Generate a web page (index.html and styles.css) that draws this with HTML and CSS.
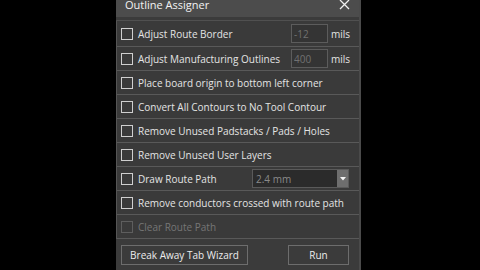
FILE: index.html
```html
<!DOCTYPE html>
<html>
<head>
<title>Outline Assigner</title>
<link rel="stylesheet" href="styles.css">
</head>
<body>

<div class="dialog">
  <div class="titlebar">
    <span class="title">Outline Assigner</span>
    <svg class="close" width="11" height="11" viewBox="0 0 11 11">
      <path d="M1 1 L10 10 M10 1 L1 10" stroke="#f0f0f0" stroke-width="1.3" fill="none"/>
    </svg>
  </div>

  <div class="options">
    <div class="row first">
      <span class="check"></span>
      <span class="label">Adjust Route Border</span>
      <input class="field" type="text" value="-12" disabled>
      <span class="unit">mils</span>
    </div>
    <div class="row">
      <span class="check"></span>
      <span class="label">Adjust Manufacturing Outlines</span>
      <input class="field" type="text" value="400" disabled>
      <span class="unit">mils</span>
    </div>
    <div class="row">
      <span class="check"></span>
      <span class="label">Place board origin to bottom left corner</span>
    </div>
    <div class="row">
      <span class="check"></span>
      <span class="label">Convert All Contours to No Tool Contour</span>
    </div>
    <div class="row">
      <span class="check"></span>
      <span class="label">Remove Unused Padstacks / Pads / Holes</span>
    </div>
    <div class="row">
      <span class="check"></span>
      <span class="label">Remove Unused User Layers</span>
    </div>
    <div class="row">
      <span class="check"></span>
      <span class="label">Draw Route Path</span>
      <div class="select">
        <span class="select-value">2.4 mm</span>
        <span class="select-arrow">
          <svg width="6" height="4" viewBox="0 0 6 4"><path d="M0 0 H6 L3 3.5 Z" fill="#f4f4f4"/></svg>
        </span>
      </div>
    </div>
    <div class="row">
      <span class="check"></span>
      <span class="label">Remove conductors crossed with route path</span>
    </div>
    <div class="row disabled">
      <span class="check"></span>
      <span class="label">Clear Route Path</span>
    </div>
  </div>

  <div class="buttons">
    <button class="btn wide">Break Away Tab Wizard</button>
    <button class="btn run">Run</button>
  </div>
</div>

</body>
</html>
```

FILE: styles.css
```css
body {
    margin: 0;
    background-color: #000;
    font-family: "Open Sans", "Noto Sans", sans-serif;
    font-size: 10px;
    color: #e4e4e4;
    overflow: hidden;
}

.dialog {
    width: 243px;
    margin: -9px 0 0 116px;
    background-color: #3b3b3b;
    border-right: 2px solid #4a4a4a;
    height: 300px;
}

.titlebar {
    height: 26px;
    background-color: #4c4c4c;
    display: flex;
    align-items: center;
    justify-content: space-between;
    padding: 0 9px 0 9px;
    font-size: 11px;
    color: #f2f2f2;
}

.options {
    margin-top: 3px;
    border-top: 1px solid #505050;
}

.row {
    height: 23px;
    border-bottom: 1px solid #595959;
    border-left: 1px solid #555;
    display: flex;
    align-items: center;
    padding-left: 4px;
    background-color: #3a3a3a;
}

.row.first {
    height: 25px;
}

.check {
    width: 10px;
    height: 10px;
    border: 1px solid #cfcfcf;
    background-color: #3a3a3a;
    margin-right: 5px;
    flex-shrink: 0;
}

.label {
    white-space: nowrap;
}

.field {
    margin-left: auto;
    width: 37px;
    height: 19px;
    box-sizing: border-box;
    background-color: #343434;
    border: 1px solid #5c5c5c;
    color: #717171;
    font-family: inherit;
    font-size: 10px;
    padding: 0 2px;
}

.unit {
    width: 31px;
    padding-left: 3px;
    box-sizing: border-box;
}

.select {
    margin-left: auto;
    margin-right: 10px;
    width: 97px;
    height: 19px;
    box-sizing: border-box;
    border: 1px solid #5a5a5a;
    background-color: #2b2b2b;
    display: flex;
    align-items: center;
    color: #8a8a8a;
}

.select-value {
    flex: 1;
    padding-left: 3px;
}

.select-arrow {
    width: 11px;
    height: 17px;
    background-color: #6e6e6e;
    display: flex;
    align-items: center;
    justify-content: center;
}

.disabled {
    color: #767676;
}

.disabled .check {
    border-color: #5e5e5e;
}

.buttons {
    display: flex;
    justify-content: space-between;
    padding: 6px 10px 0 5px;
}

.btn {
    height: 20px;
    background-color: #3b3b3b;
    border: 1px solid #6d6d6d;
    color: #ececec;
    font-family: inherit;
    font-size: 10px;
    padding: 0;
}

.btn.wide {
    width: 127px;
}

.btn.run {
    width: 61px;
}
```
